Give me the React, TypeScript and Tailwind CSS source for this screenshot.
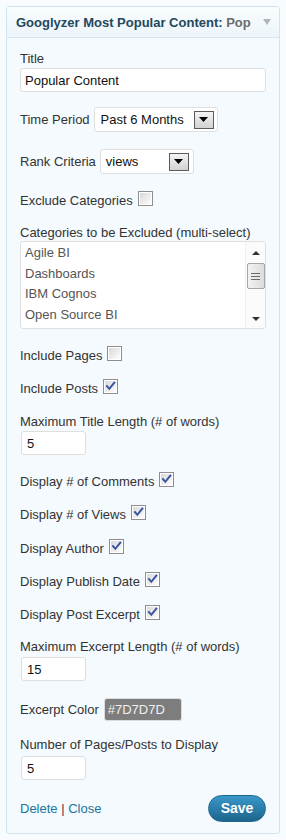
import React from "react";

function Check({ checked }: { checked?: boolean }) {
  return (
    <span className="relative inline-block w-[15px] h-[15px] shrink-0 border border-[#8e8e8e] bg-white p-[1px]">
      <span className="block w-full h-full bg-linear-to-br from-[#d9d9d9] to-[#fdfdfd]" />
      {checked && (
        <svg className="absolute left-[1px] top-[1px]" width="11" height="11" viewBox="0 0 11 11">
          <path d="M2 5.2 L4.3 7.8 L9.3 1.6" fill="none" stroke="#3a559f" strokeWidth="2" strokeLinecap="square" />
        </svg>
      )}
    </span>
  );
}

function CheckRow({ label, checked, mt }: { label: string; checked?: boolean; mt: string }) {
  return (
    <div className={`flex items-start gap-[5px] ${mt}`}>
      <span className="mt-[2px]">{label}</span>
      <Check checked={checked} />
    </div>
  );
}

function ArrowBtn() {
  return (
    <span className="flex items-center justify-center w-[20px] h-[18px] border border-[#5c5c5c] bg-linear-to-b from-[#f4f4f4] to-[#d2d2d2]">
      <svg width="9" height="5" viewBox="0 0 9 5">
        <path d="M0 0 H9 L4.5 5 Z" fill="#000" />
      </svg>
    </span>
  );
}

export default function App() {
  return (
    <div className="w-[286px] h-[840px] bg-[#f8fcfe] pt-[6px] pl-[6px] font-['Liberation_Sans',Arial,sans-serif] text-[13px] leading-[15px] text-[#333]">
      <div className="w-[274px] border border-[#d0e4ed] rounded-[3px] bg-[#f4fafd]">
        <div className="h-[31px] border-b border-[#d3e6ef] bg-linear-to-b from-[#f8fcfe] to-[#edf5fa] flex items-center pl-[9px]">
          <div className="w-[238px] whitespace-nowrap font-bold text-[#23485c]">
            Googlyzer Most Popular Content:<span className="text-[#6a6a6a]"> Pop</span>
          </div>
          <svg className="ml-[9px]" width="8" height="6" viewBox="0 0 8 6">
            <path d="M0 0 H8 L4 6 Z" fill="#b3b3b3" />
          </svg>
        </div>

        <div className="px-[13px] pt-[13px] pb-[11px] flex flex-col">
          <div>Title</div>
          <div className="mt-[2px] h-[24px] border border-[#dfdfdf] rounded-[3px] bg-white pl-[4px] flex items-center text-[#111]">
            Popular Content
          </div>

          <div className="mt-[15px] flex items-center gap-[4px]">
            <span>Time Period</span>
            <div className="w-[124px] h-[25px] border border-[#dfdfdf] rounded-[3px] bg-white flex items-center justify-between pl-[6px] pr-[3px] text-[#111]">
              <span>Past 6 Months</span>
              <ArrowBtn />
            </div>
          </div>

          <div className="mt-[17px] flex items-center gap-[4px]">
            <span>Rank Criteria</span>
            <div className="w-[94px] h-[25px] border border-[#dfdfdf] rounded-[3px] bg-white flex items-center justify-between pl-[5px] pr-[4px] text-[#111]">
              <span>views</span>
              <ArrowBtn />
            </div>
          </div>

          <CheckRow label="Exclude Categories" mt="mt-[17px]" />

          <div className="mt-[17px]">Categories to be Excluded (multi-select)</div>
          <div className="mt-[1px] h-[88px] border border-[#dfdfdf] rounded-[3px] bg-white flex overflow-hidden">
            <div className="flex-1 pl-[4px] pt-[1px] text-[#555]">
              {["Agile BI", "Dashboards", "IBM Cognos", "Open Source BI"].map((t) => (
                <div key={t} className="leading-[20.5px] whitespace-nowrap">
                  {t}
                </div>
              ))}
            </div>
            <div className="w-[20px] flex flex-col items-center bg-[#fbfbfb] border-l border-[#f0f0f0]">
              <div className="h-[21px] flex items-center justify-center">
                <svg width="8" height="4" viewBox="0 0 8 4">
                  <path d="M0 4 H8 L4 0 Z" fill="#333" />
                </svg>
              </div>
              <div className="w-[18px] h-[26px] rounded-[2px] border border-[#a6a6a6] bg-linear-to-r from-[#f2f2f2] to-[#dcdcdc] flex flex-col items-center justify-center gap-[2px]">
                <span className="block w-[9px] h-[1px] bg-[#6b6b6b]" />
                <span className="block w-[9px] h-[1px] bg-[#6b6b6b]" />
                <span className="block w-[9px] h-[1px] bg-[#6b6b6b]" />
              </div>
              <div className="flex-1" />
              <div className="h-[19px] flex items-center justify-center">
                <svg width="8" height="4" viewBox="0 0 8 4">
                  <path d="M0 0 H8 L4 4 Z" fill="#333" />
                </svg>
              </div>
            </div>
          </div>

          <CheckRow label="Include Pages" mt="mt-[17px]" />
          <CheckRow label="Include Posts" checked mt="mt-[16px]" />

          <div className="mt-[18px]">Maximum Title Length (# of words)</div>
          <div className="mt-[2px] ml-[1px] w-[65px] h-[24px] border border-[#dfdfdf] rounded-[3px] bg-white pl-[5px] flex items-center text-[#111]">
            5
          </div>

          <CheckRow label="Display # of Comments" checked mt="mt-[17px]" />
          <CheckRow label="Display # of Views" checked mt="mt-[16px]" />
          <CheckRow label="Display Author" checked mt="mt-[17px]" />
          <CheckRow label="Display Publish Date" checked mt="mt-[16px]" />
          <CheckRow label="Display Post Excerpt" checked mt="mt-[16px]" />

          <div className="mt-[17px]">Maximum Excerpt Length (# of words)</div>
          <div className="mt-[3px] ml-[1px] w-[65px] h-[24px] border border-[#dfdfdf] rounded-[3px] bg-white pl-[5px] flex items-center text-[#111]">
            15
          </div>

          <div className="mt-[17px] flex items-center gap-[5px]">
            <span>Excerpt Color</span>
            <div className="w-[78px] h-[23px] rounded-[3px] border border-[#dcdcdc] bg-[#7d7d7d] pl-[3px] flex items-center text-[#efefef]">
              #7D7D7D
            </div>
          </div>

          <div className="mt-[16px]">Number of Pages/Posts to Display</div>
          <div className="mt-[4px] ml-[1px] w-[65px] h-[24px] border border-[#dfdfdf] rounded-[3px] bg-white pl-[5px] flex items-center text-[#111]">
            5
          </div>

          <div className="mt-[15px] flex items-center justify-between">
            <div>
              <span className="text-[#21759b]">Delete</span>
              <span className="text-[#5b2a4e]"> | </span>
              <span className="text-[#21759b]">Close</span>
            </div>
            <div className="w-[58px] h-[27px] rounded-full border border-[#1d6890] bg-linear-to-b from-[#3a98ca] to-[#1c658d] flex items-center justify-center text-white font-bold text-[14px]">
              Save
            </div>
          </div>
        </div>
      </div>
    </div>
  );
}
